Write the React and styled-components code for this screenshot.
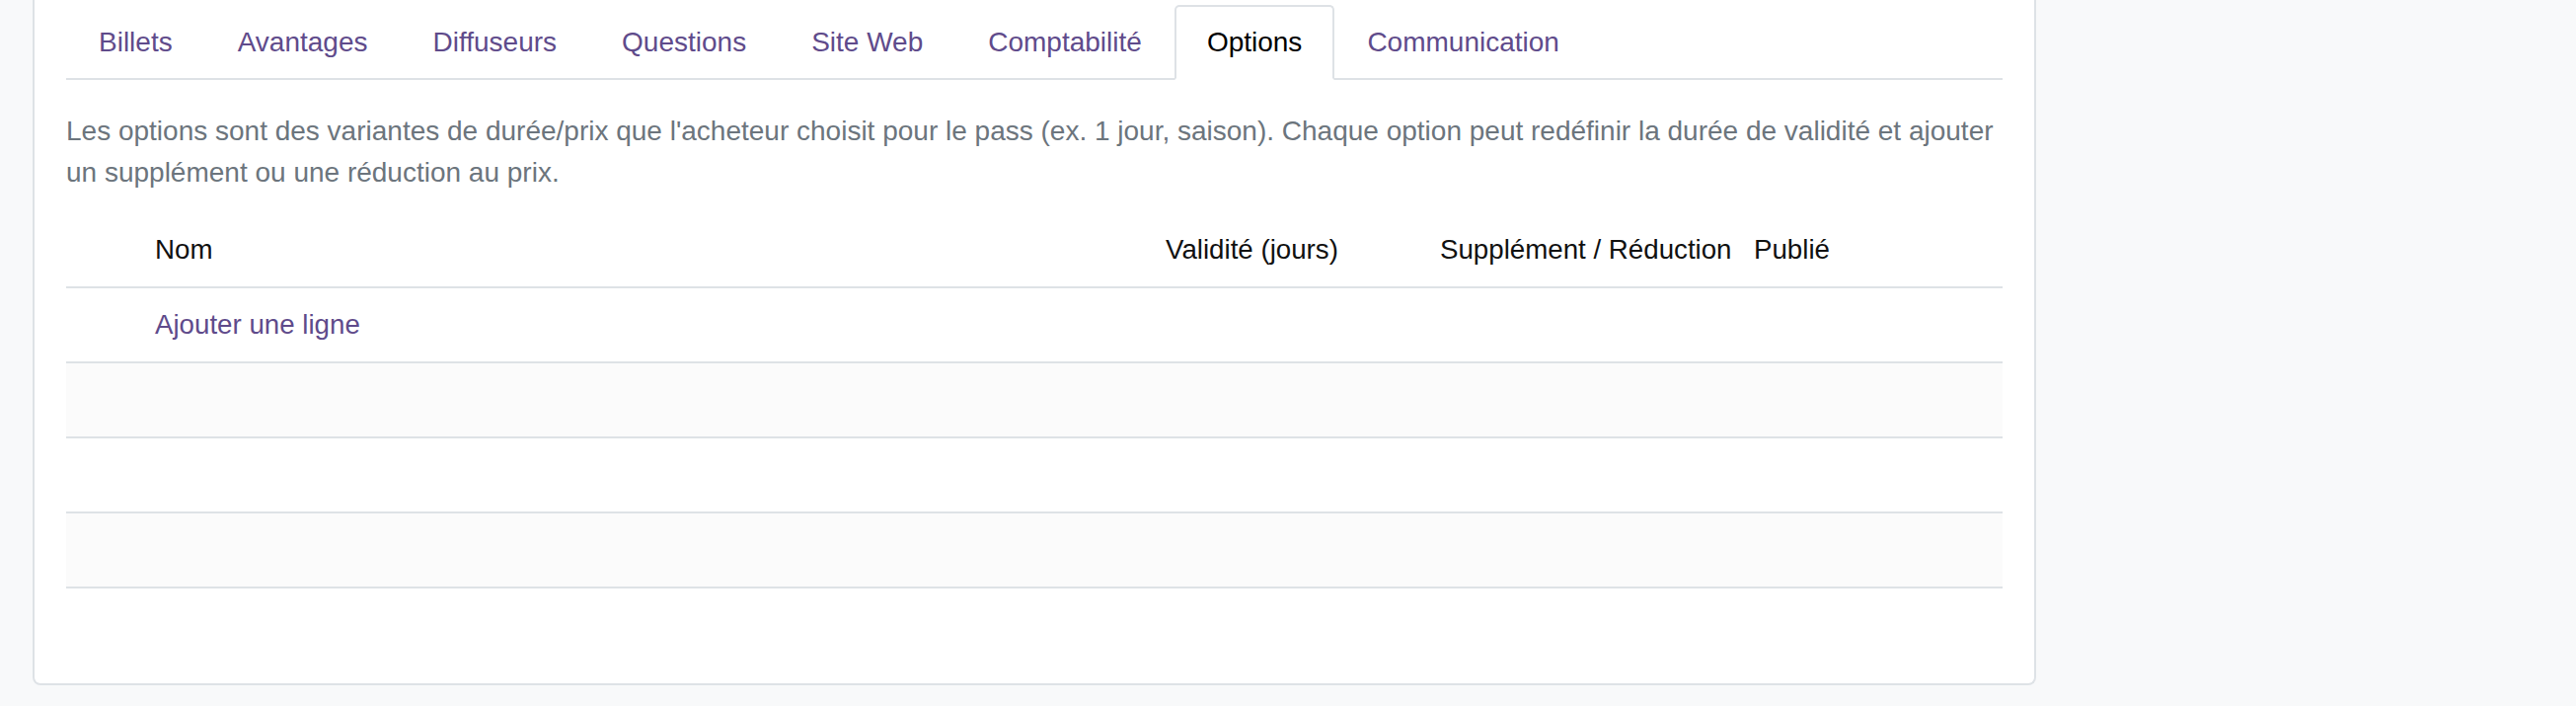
import styled, { createGlobalStyle } from "styled-components";

const GlobalStyle = createGlobalStyle`
    body {
        margin: 0;
        background: #f8f9fa;
        font-family: "Liberation Sans", Arial, sans-serif;
    }
`;

const Page = styled.div`
    padding: 0 0 23px 33px;
`;

const Card = styled.div`
    width: 2030px;
    box-sizing: border-box;
    background: #fff;
    border: 2px solid #dee2e6;
    border-top: none;
    border-radius: 0 0 8px 8px;
    padding: 5px 32px 96px 32px;
`;

const Tabs = styled.ul`
    display: flex;
    list-style: none;
    margin: 0;
    padding: 0;
    border-bottom: 2px solid #dee2e6;
`;

const Tab = styled.li`
    margin-bottom: -2px;
    padding: 15px 31px;
    border: 2px solid transparent;
    border-radius: 5px 5px 0 0;
    font-size: 28px;
    line-height: 1.5;
    color: ${props => props.active ? "#000" : "#5f4b8b"};
    background: ${props => props.active ? "#fff" : "transparent"};
    border-color: ${props => props.active ? "#dee2e6 #dee2e6 #fff" : "transparent"};
    cursor: pointer;
`;

const Help = styled.p`
    margin: 31px 0 19.5px;
    font-size: 28px;
    line-height: 1.5;
    color: #6c757d;
`;

const Row = styled.div`
    display: grid;
    grid-template-columns: 90px 1024px 278px 318px 1fr;
    align-items: center;
    height: 76px;
    box-sizing: border-box;
    border-bottom: 2px solid #dee2e6;
    background: ${props => props.striped ? "#fbfbfb" : "#fff"};
    font-size: 27.7px;
    line-height: 1.5;
    color: #111;
`;

const Cell = styled.div`
    white-space: nowrap;
`;

const AddLink = styled.a`
    color: #5f4b8b;
    text-decoration: none;
    cursor: pointer;
`;

const tabs = ["Billets", "Avantages", "Diffuseurs", "Questions", "Site Web", "Comptabilité", "Options", "Communication"];

const App = () => {
    return (
        <Page>
            <GlobalStyle />
            <Card>
                <Tabs>
                    {tabs.map(t => (
                        <Tab key={t} active={t === "Options"}>{t}</Tab>
                    ))}
                </Tabs>
                <Help>
                    Les options sont des variantes de durée/prix que l'acheteur choisit pour le pass (ex. 1 jour, saison). Chaque option peut redéfinir la durée de validité et ajouter un supplément ou une réduction au prix.
                </Help>
                <Row>
                    <Cell />
                    <Cell>Nom</Cell>
                    <Cell>Validité (jours)</Cell>
                    <Cell>Supplément / Réduction</Cell>
                    <Cell>Publié</Cell>
                </Row>
                <Row>
                    <Cell />
                    <Cell><AddLink>Ajouter une ligne</AddLink></Cell>
                </Row>
                <Row striped />
                <Row />
                <Row striped />
            </Card>
        </Page>
    );
};

export default App;
